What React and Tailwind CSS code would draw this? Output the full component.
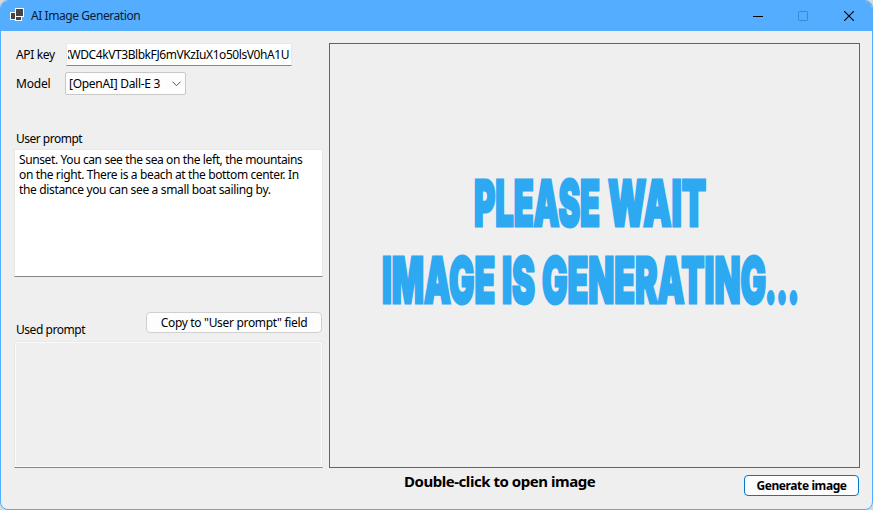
function AppIcon() {
  return (
    <svg width="16" height="16" viewBox="0 0 16 16" shapeRendering="crispEdges" className="shrink-0">
      <rect x="5" y="0" width="9" height="9" fill="#fff" />
      <rect x="6" y="1" width="7" height="7" fill="#444" />
      <rect x="0" y="4" width="6" height="8" fill="#fff" />
      <rect x="1" y="5" width="4" height="6" fill="#444" />
      <rect x="5" y="8" width="7" height="5" fill="#fff" />
      <rect x="6" y="9" width="5" height="3" fill="#444" />
    </svg>
  );
}

function TitleBar() {
  return (
    <header className="flex h-[30px] shrink-0 items-center bg-[#54adff] pl-[9px] text-[#0b1c30]">
      <AppIcon />
      <span className="ml-[5px] text-[12px] leading-4 tracking-[-0.43px]">AI Image Generation</span>
      <div className="ml-auto flex h-full">
        <button className="flex w-[44px] items-center justify-center" aria-label="Minimize">
          <svg width="10" height="10" viewBox="0 0 10 10"><path d="M0 5.5h10" stroke="#000" /></svg>
        </button>
        <button className="flex w-[46px] items-center justify-center" aria-label="Maximize">
          <svg width="10" height="10" viewBox="0 0 10 10"><rect x=".5" y=".5" width="9" height="9" rx=".8" fill="none" stroke="#3f88cd" /></svg>
        </button>
        <button className="flex w-[46px] items-center justify-center" aria-label="Close">
          <svg width="10" height="10" viewBox="0 0 10 10"><path d="M0 0l10 10M10 0L0 10" stroke="#000" strokeWidth="1.1" /></svg>
        </button>
      </div>
    </header>
  );
}

const words = [
  { text: "PLEASE", x: 144, y: 182, w: 126 },
  { text: "WAIT", x: 278, y: 182, w: 98 },
  { text: "IMAGE", x: 52, y: 259, w: 113 },
  { text: "IS", x: 172, y: 259, w: 33 },
  { text: "GENERATING", x: 212, y: 259, w: 224 },
  { text: "...", x: 435, y: 259, w: 34 },
];

function Preview() {
  return (
    <div className="h-[425px] w-[531px] border border-[#646464]">
      <svg width="529" height="423" viewBox="0 0 529 423">
        {words.map((w) => (
          <text
            key={w.text}
            x={w.x}
            y={w.y}
            textLength={w.w}
            lengthAdjust="spacingAndGlyphs"
            fill="#2da9f2"
            stroke="#2da9f2"
            strokeWidth="3"
            className="font-['Inter',sans-serif] text-[63px] font-black"
          >
            {w.text}
          </text>
        ))}
      </svg>
    </div>
  );
}

export default function App() {
  return (
    <div className="h-[510px] w-[873px] bg-[#d5d9dd] font-['Noto_Sans','Open_Sans',sans-serif] text-[12px] leading-[15px] text-black">
      <div className="flex h-full flex-col overflow-hidden rounded-[8px] border border-[#54adff] bg-[#efefef]">
        <TitleBar />
        <main className="flex pl-[13px] pt-3">
          <section className="flex w-[309px] flex-col">
            <div className="flex h-[23px] items-center">
              <label className="w-[52px] pl-[2px] tracking-[-0.35px]">API key</label>
              <div className="flex h-[23px] w-[226px] items-center justify-end overflow-hidden border border-b-[#868686] border-l-[#e8e8e8] border-r-[#e8e8e8] border-t-[#e8e8e8] bg-white pr-[2px]">
                <div className="flex w-[221px] justify-end overflow-hidden whitespace-nowrap">
                  <span className="tracking-[-0.43px]">XWDC4kVT3BlbkFJ6mVKzIuX1o50lsV0hA1U</span>
                </div>
              </div>
            </div>
            <div className="mt-[6px] flex h-[23px] items-center">
              <label className="w-[51px] pl-[2px] tracking-[-0.2px]">Model</label>
              <div className="flex h-[23px] w-[121px] items-center rounded-[2px] border border-[#c8c8c8] bg-[#fdfdfd] pl-[3px] pr-1">
                <span className="tracking-[-0.28px]">[OpenAI] Dall-E 3</span>
                <svg className="ml-auto" width="9" height="6" viewBox="0 0 9 6"><path d="M.5 .7l4 4 4-4" fill="none" stroke="#555" /></svg>
              </div>
            </div>
            <label className="mt-[36px] h-[18px] pl-[2px] tracking-[-0.5px]">User prompt</label>
            <div className="h-[128px] w-[309px] whitespace-nowrap border border-b-[#868686] border-l-[#e8e8e8] border-r-[#e8e8e8] border-t-[#e8e8e8] bg-white pl-[4px] pt-[2px]">
              <p className="tracking-[-0.39px]">Sunset. You can see the sea on the left, the mountains</p>
              <p className="tracking-[-0.37px]">on the right. There is a beach at the bottom center. In</p>
              <p className="tracking-[-0.35px]">the distance you can see a small boat sailing by.</p>
            </div>
            <div className="mt-[35px] flex h-[29px] items-start justify-between pr-px">
              <label className="pl-[2px] pt-[10px] tracking-[-0.46px]">Used prompt</label>
              <button className="h-[21px] w-[176px] rounded-[4px] border border-[#d0d0d0] bg-[#fdfdfd] leading-[18px] tracking-[-0.32px]">Copy to "User prompt" field</button>
            </div>
            <div className="h-[127px] w-[309px] border border-b-[#868686] border-l-[#e8e8e8] border-r-[#e8e8e8] border-t-[#e8e8e8]">
              <div className="h-full border border-[#fbfbfb]" />
            </div>
          </section>
          <section className="ml-[6px] w-[531px]">
            <Preview />
            <div className="flex items-start pt-[6px]">
              <span className="w-[415px] whitespace-nowrap pl-[75px] text-[15px] font-bold leading-[15px] tracking-[-0.46px]">Double-click to open image</span>
              <button className="mt-px h-[21px] w-[115px] whitespace-nowrap rounded-[4px] border border-[#0078d4] bg-[#fdfdfd] font-bold leading-[18px] tracking-[-0.4px]">Generate image</button>
            </div>
          </section>
        </main>
      </div>
    </div>
  );
}
